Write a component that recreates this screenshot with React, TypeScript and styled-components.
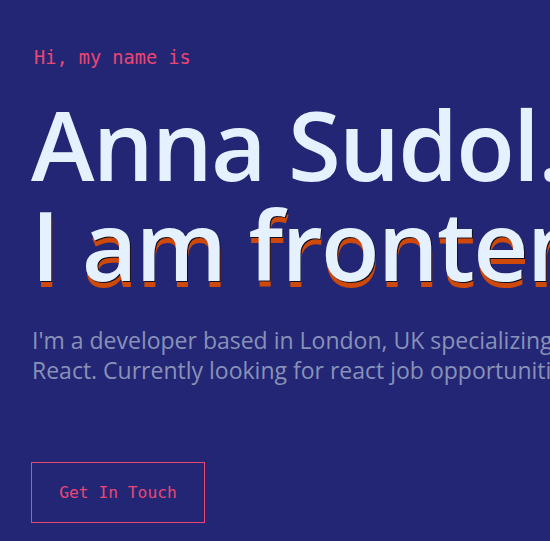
import React from "react";
import styled, { createGlobalStyle } from "styled-components";

const Global = createGlobalStyle`
  html, body { margin: 0; padding: 0; background: #232675; overflow: hidden; }
  #root { width: 550px; height: 541px; overflow: hidden; }
`;

const Hero = styled.section`
  box-sizing: border-box;
  width: 550px;
  height: 541px;
  background: #232675;
  padding: 45px 0 0 31px;
  display: flex;
  flex-direction: column;
  align-items: flex-start;
  overflow: hidden;
`;

const Greeting = styled.p`
  margin: 0 0 0 3px;
  font-family: "DejaVu Sans Mono", "Liberation Mono", monospace;
  font-size: 18.6px;
  line-height: 26px;
  color: #ea4673;
  white-space: nowrap;
`;

const Title = styled.h1`
  margin: 23px 0 0 0;
  font-family: "Open Sans", sans-serif;
  font-weight: 600;
  font-size: 96px;
  line-height: 100px;
  color: #e6f1ff;
  white-space: nowrap;
  letter-spacing: -1.8px;
`;

const Subtitle = styled.h2`
  margin: 0;
  font-family: "Open Sans", sans-serif;
  font-weight: 600;
  font-size: 96px;
  line-height: 100px;
  color: #e6f1ff;
  white-space: nowrap;
  letter-spacing: -1.8px;
  text-shadow: 1px 1px 0 #0d0d22, 1px 6px 0 #cf4a0a;
`;

const Intro = styled.p`
  margin: 31px 0 0 1px;
  font-family: "Open Sans", sans-serif;
  font-size: 23px;
  line-height: 30px;
  color: #8892b8;
  white-space: nowrap;
`;

const Cta = styled.a`
  margin-top: 77px;
  box-sizing: border-box;
  width: 174px;
  height: 61px;
  display: flex;
  align-items: center;
  justify-content: center;
  border: 1.5px solid #ea4673;
  font-family: "DejaVu Sans Mono", "Liberation Mono", monospace;
  font-size: 16.3px;
  color: #ea4673;
  text-decoration: none;
`;

export default function App() {
  return (
    <>
      <Global />
      <Hero>
        <Greeting>Hi, my name is</Greeting>
        <Title>Anna Sudol.</Title>
        <Subtitle>I am frontend developer.</Subtitle>
        <Intro>
          I'm a developer based in London, UK specializing in
          <br />
          React. Currently looking for react job opportunities.
        </Intro>
        <Cta href="#contact">Get In Touch</Cta>
      </Hero>
    </>
  );
}
